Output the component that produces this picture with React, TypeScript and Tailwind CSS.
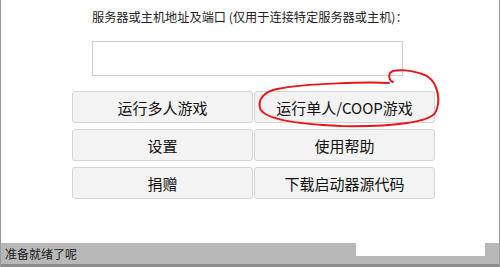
import React from 'react';

const FONT = { fontFamily: '"Microsoft YaHei", "Noto Sans CJK SC", "Noto Sans", sans-serif' };

function LaunchButton({ label }: { label: string }) {
  return (
    <button
      type="button"
      className="h-[32px] bg-[#f3f3f3] border border-[#d4d4d4] rounded-[3px] text-[15px] text-[#111] leading-none"
    >
      {label}
    </button>
  );
}

export default function App() {
  const buttons = ['运行多人游戏', '运行单人/COOP游戏', '设置', '使用帮助', '捐赠', '下载启动器源代码'];

  return (
    <div style={FONT} className="relative w-[500px] h-[267px] bg-white border-x border-[#9a9a9a] flex flex-col overflow-hidden">
      <div className="flex-1 flex flex-col">
        <p className="mt-[8px] ml-[91px] text-[12.2px] leading-[19px] text-[#222]">
          服务器或主机地址及端口 (仅用于连接特定服务器或主机)：
        </p>
        <input
          className="mt-[14px] ml-[91px] w-[311px] h-[35px] border border-[#cfcfcf] bg-white outline-none"
          aria-label="server"
        />
        <div className="mt-[15px] ml-[71px] grid grid-cols-[181px_181px] gap-x-[1px] gap-y-[6px]">
          {buttons.map(b => <LaunchButton key={b} label={b} />)}
        </div>
      </div>

      {/* status bar */}
      <div className="relative h-[24px] bg-[#b8b8b8] border-b-[3px] border-[#8c8c8c] flex items-center px-[4px]">
        <span className="text-[12px] text-[#1a1a1a] leading-none">准备就绪了呢</span>
        <div className="absolute left-[355px] top-0 w-[129px] h-[13px] bg-white" />
      </div>

      {/* red hand-drawn annotation */}
      <svg className="absolute left-0 top-0 pointer-events-none" width="500" height="267" viewBox="0 0 500 267">
        <path
          d="M388 83 C 370 82, 305 83, 276 89 C 262 92, 257 100, 259 108 C 262 118, 292 124, 340 126 C 392 127, 428 122, 434 113 C 440 103, 438 84, 426 76 C 413 70, 393 68, 389 73 C 387 77, 389 81, 392 82"
          fill="none"
          stroke="#e8161b"
          strokeWidth="2"
          strokeLinecap="round"
        />
      </svg>
    </div>
  );
}
